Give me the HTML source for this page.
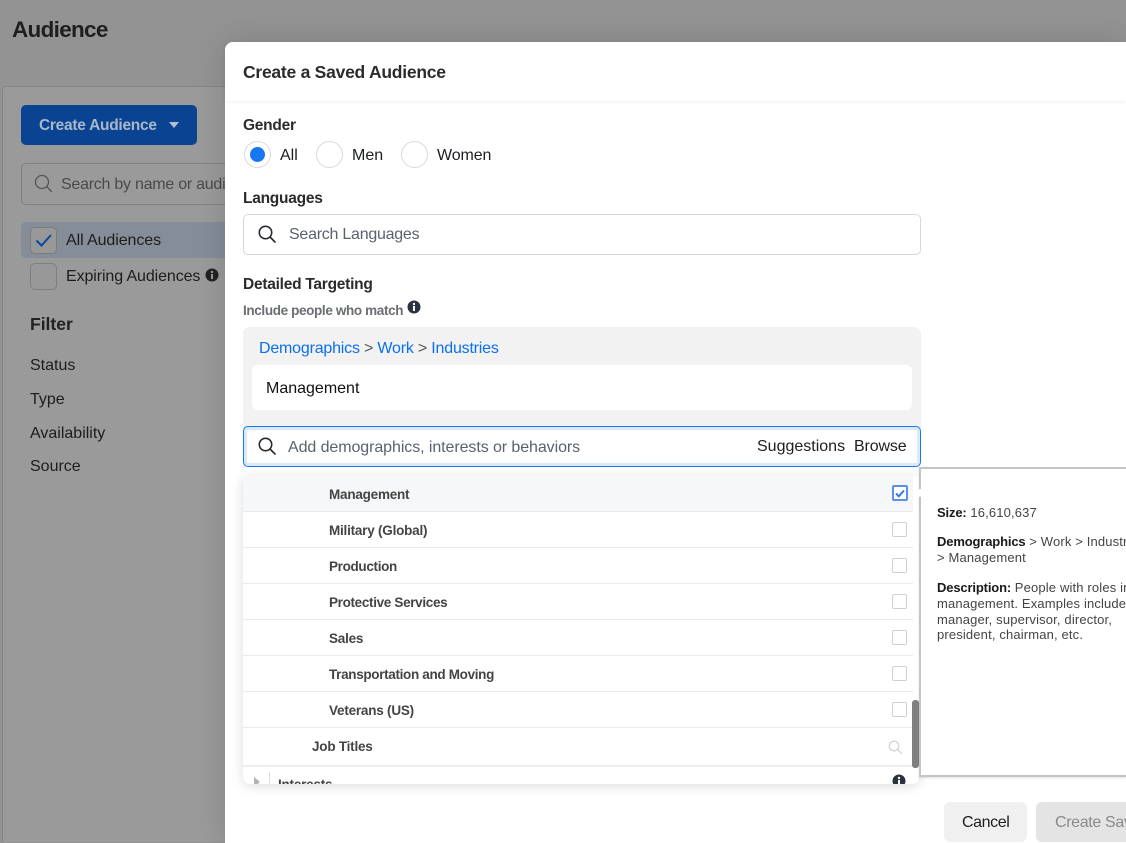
<!DOCTYPE html>
<html><head><meta charset="utf-8"><style>
html,body{margin:0;padding:0;width:1126px;height:843px;overflow:hidden}
#w{position:relative;width:1126px;height:843px;overflow:hidden;background:#939393;font-family:"Liberation Sans",sans-serif;color:#1c1e21}
.a{position:absolute;white-space:nowrap}
.t{position:absolute;white-space:nowrap;font-size:16px;line-height:20px;margin-top:1px}
.b{font-weight:700}
.h{font-size:15.5px;letter-spacing:-.25px;color:#2b2b2b}
.row{position:absolute;left:243px;width:670px;height:35px;border-bottom:1px solid #e9eaec;background:#fff}
.row span{position:absolute;left:86px;top:10px;font-size:13.5px;line-height:18px;font-weight:700;color:#444;letter-spacing:-.22px}
.row span.n{letter-spacing:-.33px}
.row i{position:absolute;left:649px;top:10px;width:13px;height:13px;border:1.5px solid #ccd0d5;border-radius:2px}
.rad{position:absolute;width:25px;height:25px;border:1px solid #d9d9d9;border-radius:50%;background:#fff;top:141px}
.p{font-size:13px;line-height:15.75px;color:#444;letter-spacing:.15px;white-space:nowrap;position:absolute;left:0}
.p b{color:#1a1a1a;letter-spacing:-.15px}
svg{position:absolute;display:block}
</style></head><body><div id="w">
<div class="a b" style="left:12px;top:16px;font-size:22.5px;line-height:28px;color:#1f1f1f;letter-spacing:-.7px">Audience</div>
<div class="a" style="left:2px;top:86px;width:300px;height:755px;background:#9a9a9a;border:1px solid #858585;border-bottom:0;border-radius:4px 4px 0 0"></div>
<div class="a" style="left:21px;top:105px;width:176px;height:40px;background:#0a4391;border-radius:5px"></div>
<div class="t b" style="left:39px;top:115px;color:#a9b7c9;letter-spacing:-.27px;font-size:15.5px">Create Audience</div>
<div class="a" style="left:169px;top:122px;width:0;height:0;border-left:5.5px solid transparent;border-right:5.5px solid transparent;border-top:6px solid #b4bfce"></div>
<div class="a" style="left:21px;top:163px;width:300px;height:40px;border:1px solid #808080;border-radius:5px"></div>
<svg style="left:34px;top:174px" width="20" height="20" viewBox="0 0 20 20" fill="none" stroke="#555" stroke-width="1.3"><circle cx="8" cy="8" r="6.5"/><path d="M13 13l4.5 4.5" stroke-linecap="round"/></svg>
<div class="t" style="left:61px;top:174px;color:#4a4a4a;width:164px;overflow:hidden;letter-spacing:-.25px">Search by name or audience</div>
<div class="a" style="left:21px;top:222px;width:205px;height:36px;background:#858d99;border-radius:5px 0 0 5px"></div>
<div class="a" style="left:30px;top:227px;width:25px;height:25px;border:1px solid #7c7c7c;border-radius:5px;background:#989898"></div>
<svg style="left:35px;top:233px" width="18" height="15" viewBox="0 0 18 15" fill="none" stroke="#0a4aa0" stroke-width="2"><path d="M1.5 7.5l5 5L16 2"/></svg>
<div class="t" style="left:66px;top:230px;color:#1d1d1d;letter-spacing:-.08px">All Audiences</div>
<div class="a" style="left:30px;top:263px;width:25px;height:25px;border:1px solid #7f7f7f;border-radius:5px;background:#989898"></div>
<div class="t" style="left:66px;top:266px;color:#1d1d1d;letter-spacing:-.1px">Expiring Audiences</div>
<svg style="left:205px;top:268px" width="14" height="14" viewBox="0 0 14 14"><circle cx="7" cy="7" r="6.5" fill="#222"/><rect x="6" y="6" width="2" height="5" fill="#999"/><circle cx="7" cy="4" r="1.2" fill="#999"/></svg>
<div class="a b" style="left:30px;top:314px;font-size:17.5px;line-height:21px;color:#222">Filter</div>
<div class="t" style="left:30px;top:355px;color:#1d1d1d">Status</div>
<div class="t" style="left:30px;top:389px;color:#1d1d1d">Type</div>
<div class="t" style="left:30px;top:423px;color:#1d1d1d">Availability</div>
<div class="t" style="left:30px;top:456px;color:#1d1d1d">Source</div>

<div class="a" style="left:225px;top:42px;width:901px;height:801px;background:#fff;border-radius:8px 0 0 0;box-shadow:0 0 30px rgba(0,0,0,.14)"></div>
<div class="a" style="left:225px;top:42px;width:901px;height:59px;border-radius:8px 0 0 0;box-shadow:0 1px 3px rgba(0,0,0,.07);background:#fff"></div>
<div class="a b" style="left:243px;top:61px;font-size:17.5px;line-height:22px;color:#2b2b2b;letter-spacing:-.25px">Create a Saved Audience</div>

<div class="t b h" style="left:243px;top:115px">Gender</div>
<div class="rad" style="left:244px"></div>
<div class="a" style="left:250px;top:147px;width:15px;height:15px;border-radius:50%;background:#1877f2"></div>
<div class="t" style="left:280px;top:145px">All</div>
<div class="rad" style="left:316px"></div>
<div class="t" style="left:352px;top:145px">Men</div>
<div class="rad" style="left:401px"></div>
<div class="t" style="left:437px;top:145px;letter-spacing:-.1px">Women</div>

<div class="t b h" style="left:243px;top:188px">Languages</div>
<div class="a" style="left:243px;top:214px;width:676px;height:39px;border:1px solid #d6d8db;border-radius:5px;background:#fff"></div>
<svg style="left:258px;top:225px" width="19" height="19" viewBox="0 0 19 19" fill="none" stroke="#26292e" stroke-width="1.6"><circle cx="7.5" cy="7.5" r="6.2"/><path d="M12 12l5 5" stroke-linecap="round"/></svg>
<div class="t" style="left:289px;top:224px;color:#5a626e;letter-spacing:-.25px">Search Languages</div>

<div class="t b h" style="left:243px;top:274px">Detailed Targeting</div>
<div class="a b" style="left:243px;top:302px;font-size:13.5px;line-height:18px;color:#6a6d72;letter-spacing:-.36px">Include people who match</div>
<svg style="left:407px;top:300px" width="14" height="14" viewBox="0 0 14 14"><circle cx="7" cy="7" r="6.5" fill="#2c3240"/><rect x="6" y="6" width="2" height="5" fill="#fff"/><circle cx="7" cy="4" r="1.2" fill="#fff"/></svg>

<div class="a" style="left:243px;top:327px;width:678px;height:115px;background:#f2f2f2;border-radius:7px 7px 0 0"></div>
<div class="t" style="left:259px;top:338px;color:#55595f;letter-spacing:-.2px"><span style="color:#0b6ff0">Demographics</span> &gt; <span style="color:#0b6ff0">Work</span> &gt; <span style="color:#0b6ff0">Industries</span></div>
<div class="a" style="left:252px;top:365px;width:660px;height:45px;background:#fff;border-radius:6px"></div>
<div class="t" style="left:266px;top:378px;color:#111">Management</div>

<div class="a" style="left:243px;top:426px;width:676px;height:39px;background:#fff;border:1px solid #1877f2;border-radius:5px;box-shadow:inset 0 0 0 3px #dce9fb"></div>
<svg style="left:258px;top:437px" width="19" height="19" viewBox="0 0 19 19" fill="none" stroke="#26292e" stroke-width="1.6"><circle cx="7.5" cy="7.5" r="6.2"/><path d="M12 12l5 5" stroke-linecap="round"/></svg>
<div class="t" style="left:288px;top:437px;color:#5a626e;letter-spacing:-.08px">Add demographics, interests or behaviors</div>
<div class="t" style="left:757px;top:436px;color:#1c1e21">Suggestions</div>
<div class="t" style="left:854px;top:436px;color:#1c1e21;letter-spacing:-.15px">Browse</div>

<div class="a" style="left:243px;top:476px;width:676px;height:308px;background:#fff;border-radius:0 0 7px 7px;box-shadow:0 2px 12px rgba(0,0,0,.14);overflow:hidden"></div>
<div class="row" style="top:476px;background:#f5f7f8"><span>Management</span><i style="border:2px solid #5b8fef;width:12px;height:12px;top:9px;background:#fff"></i></div>
<svg style="left:895px;top:489px" width="10" height="9" viewBox="0 0 10 9" fill="none" stroke="#3578e5" stroke-width="2"><path d="M1 4.5l2.8 2.8L9 1.5"/></svg>
<div class="row" style="top:512px"><span>Military (Global)</span><i></i></div>
<div class="row" style="top:548px"><span class="n">Production</span><i></i></div>
<div class="row" style="top:584px"><span class="n">Protective Services</span><i></i></div>
<div class="row" style="top:620px"><span>Sales</span><i></i></div>
<div class="row" style="top:656px"><span class="n">Transportation and Moving</span><i></i></div>
<div class="row" style="top:692px"><span>Veterans (US)</span><i></i></div>
<div class="row" style="top:728px;height:37px;border-bottom:2px solid #eceded"><span style="left:69px">Job Titles</span></div>
<svg style="left:888px;top:740px" width="15" height="15" viewBox="0 0 15 15" fill="none" stroke="#d3d5d8" stroke-width="1.3"><circle cx="6" cy="6" r="4.8"/><path d="M9.5 9.5l4 4" stroke-linecap="round"/></svg>
<div class="a" style="left:244px;top:767px;width:675px;height:17px;overflow:hidden;border-radius:0 0 7px 7px">
 <div class="a" style="left:10px;top:10px;width:0;height:0;border-left:6px solid #b0b3b8;border-top:5px solid transparent;border-bottom:5px solid transparent"></div>
 <div class="a" style="left:25px;top:5px;width:1px;height:14px;background:#dcdde0"></div>
 <div class="a b" style="left:34px;top:9px;font-size:13.5px;line-height:18px;color:#444;letter-spacing:-.22px">Interests</div>
 <svg style="left:648px;top:7px" width="14" height="14" viewBox="0 0 14 14"><circle cx="7" cy="7" r="6.5" fill="#2c3240"/><rect x="6" y="6" width="2" height="5" fill="#fff"/><circle cx="7" cy="4" r="1.2" fill="#fff"/></svg>
</div>
<div class="a" style="left:912px;top:700px;width:7px;height:68px;background:#7f7f7f;border-radius:3px"></div>

<div class="a" style="left:919px;top:467px;width:205px;height:306px;background:#fff;border:solid #c2c4c7;border-width:2px 0 2px 2px;box-shadow:0 1px 2px rgba(0,0,0,.12)"></div>
<div class="a" style="left:917px;top:490px;width:6px;height:6px;background:#fff;transform:rotate(45deg)"></div>
<div class="a" style="left:937px;top:500px;width:189px;height:150px;overflow:hidden">
<div class="p" style="top:5px"><b>Size:</b> 16,610,637</div>
<div class="p" style="top:34px"><b>Demographics</b> &gt; Work &gt; Industries<br>&gt; Management</div>
<div class="p" style="top:80px"><b>Description:</b> People with roles in<br>management. Examples include<br>manager, supervisor, director,<br>president, chairman, etc.</div>
</div>

<div class="a" style="left:944px;top:802px;width:83px;height:40px;background:#f0f0f0;border-radius:6px"></div>
<div class="t" style="left:962px;top:812px;color:#1c1e21;letter-spacing:-.4px">Cancel</div>
<div class="a" style="left:1036px;top:802px;width:90px;height:40px;background:#e4e4e4;border-radius:6px 0 0 6px;overflow:hidden">
<div class="t" style="left:19px;top:10px;color:#8a8a8a;letter-spacing:-.35px">Create Saved Audience</div>
</div>
</div></body></html>
